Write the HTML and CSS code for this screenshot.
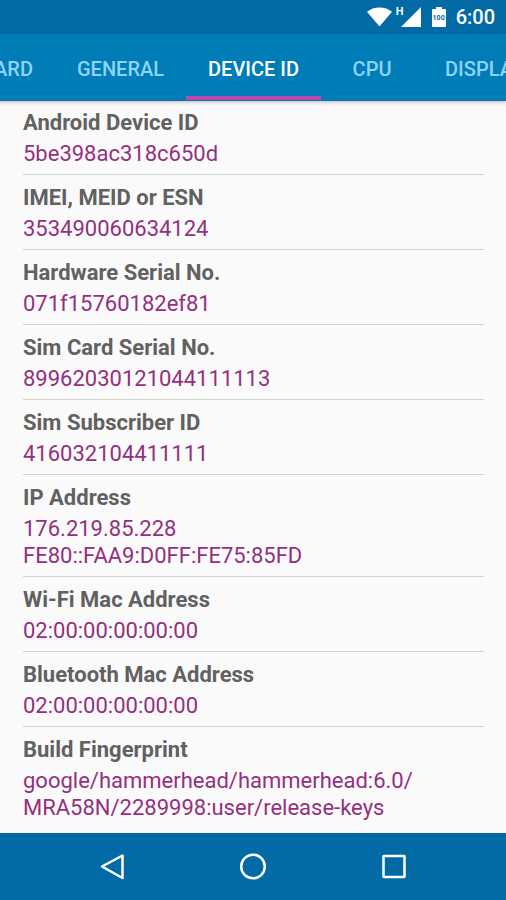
FILE: index.html
```html
<!DOCTYPE html>
<html lang="en">
<head>
<meta charset="utf-8">
<meta name="viewport" content="width=device-width, initial-scale=1">
<title>Device ID</title>
<link rel="stylesheet" href="styles.css">
</head>
<body>
<header class="status">
  <svg class="wifi" viewBox="0 0 26 20" aria-hidden="true"><path d="M0 4.500C7-1.500 19-1.500 26 4.500L13 20Z"/></svg>
  <span class="network">H</span>
  <svg class="signal" viewBox="0 0 20 20" aria-hidden="true"><path d="M0 20L20 0V20Z"/></svg>
  <span class="battery">
    <svg viewBox="0 0 14 20" aria-hidden="true"><path d="M1 2H4V0H10V2H13Q14 2 14 3V19Q14 20 13 20H1Q0 20 0 19V3Q0 2 1 2Z"/></svg>
    <span class="level">100</span>
  </span>
  <time class="clock">6:00</time>
</header>
<nav class="tabs">
  <a class="tab tab-first" href="#">DASHBOARD</a>
  <a class="tab" href="#">GENERAL</a>
  <a class="tab active" href="#" aria-current="page">DEVICE ID</a>
  <a class="tab" href="#">CPU</a>
  <a class="tab" href="#">DISPLAY</a>
</nav>
<main class="content">
  <dl class="list">
    <div class="item"><dt>Android Device ID</dt><dd>5be398ac318c650d</dd></div>
    <div class="item"><dt>IMEI, MEID or ESN</dt><dd>353490060634124</dd></div>
    <div class="item"><dt>Hardware Serial No.</dt><dd>071f15760182ef81</dd></div>
    <div class="item"><dt>Sim Card Serial No.</dt><dd>89962030121044111113</dd></div>
    <div class="item"><dt>Sim Subscriber ID</dt><dd>416032104411111</dd></div>
    <div class="item"><dt>IP Address</dt><dd>176.219.85.228<br>FE80::FAA9:D0FF:FE75:85FD</dd></div>
    <div class="item"><dt>Wi-Fi Mac Address</dt><dd>02:00:00:00:00:00</dd></div>
    <div class="item"><dt>Bluetooth Mac Address</dt><dd>02:00:00:00:00:00</dd></div>
    <div class="item"><dt>Build Fingerprint</dt><dd>google/hammerhead/hammerhead:6.0/<br>MRA58N/2289998:user/release-keys</dd></div>
  </dl>
</main>
<footer class="navbar">
  <button type="button" aria-label="Back"><svg viewBox="0 0 28 28"><path d="M24.500 2.500V25L4 13.500Z"/></svg></button>
  <button type="button" aria-label="Home"><svg viewBox="0 0 28 28"><circle cx="14" cy="13.500" r="11.800"/></svg></button>
  <button type="button" aria-label="Recent apps"><svg viewBox="0 0 28 28"><rect x="3.500" y="3" width="21" height="21" rx="0.500"/></svg></button>
</footer>
</body>
</html>
```
FILE: styles.css
```css
* { box-sizing: border-box; }

body {
  margin: 0;
  min-height: 100vh;
  display: flex;
  flex-direction: column;
  overflow-x: hidden;
  font-family: Roboto, "Liberation Sans", sans-serif;
  background: #fafafa;
}

.status {
  height: 34px;
  flex: none;
  display: flex;
  align-items: center;
  justify-content: flex-end;
  padding-right: 11px;
  background: #026ba6;
  color: #fff;
}

.status svg { display: block; height: 20px; fill: #fff; }
.wifi { width: 25px; }
.signal { width: 20px; }

.network {
  align-self: flex-start;
  width: 5px;
  margin-top: 5px;
  margin-left: 4px;
  font-size: 11px;
  line-height: 13px;
  font-weight: 700;
}

.battery { position: relative; width: 14px; margin: 0 10px 0 11px; }

.level {
  position: absolute;
  inset: 7px 0 auto;
  display: flex;
  justify-content: center;
  font-size: 7px;
  line-height: 8px;
  font-weight: 700;
  color: #026ba6;
}

.clock { font-size: 20px; line-height: 24px; font-weight: 500; }

.tabs {
  position: relative;
  height: 66px;
  flex: none;
  display: flex;
  overflow-x: clip;
  background: #007cb7;
  box-shadow: 0 1px 0 #1d6f9d, 0 2px 3px 1px rgba(0, 0, 0, 0.18);
}

.tab {
  flex: none;
  min-width: 102px;
  display: flex;
  align-items: center;
  justify-content: center;
  padding: 7px 22px 0;
  border-bottom: 4px solid transparent;
  font-size: 20px;
  line-height: 24px;
  font-weight: 500;
  color: #8fd4f8;
  text-decoration: none;
}

.tab-first {
  width: 55px;
  min-width: 0;
  justify-content: flex-end;
}

.tab.active { color: #fff; border-bottom-color: #b94bab; }

.content { flex: 1; padding: 0 22px 0 23px; }

.list { margin: 0; }

.item { padding: 9px 0 7px; border-bottom: 1px solid #d2d2d2; }
.item:last-child { border-bottom: 0; }

.item dt {
  margin-bottom: 4px;
  font-size: 22px;
  line-height: 27px;
  font-weight: 700;
  color: #616161;
}

.item dd {
  margin: 0;
  font-size: 22px;
  line-height: 27px;
  color: #93307f;
}

.navbar {
  height: 67px;
  flex: none;
  display: flex;
  align-items: center;
  justify-content: center;
  gap: 85px;
  background: #026ba6;
}

.navbar button {
  width: 56px;
  height: 56px;
  padding: 14px;
  border: 0;
  background: none;
}

.navbar svg {
  display: block;
  width: 28px;
  height: 28px;
  fill: none;
  stroke: #fff;
  stroke-width: 2.5;
  stroke-linejoin: round;
}
```
